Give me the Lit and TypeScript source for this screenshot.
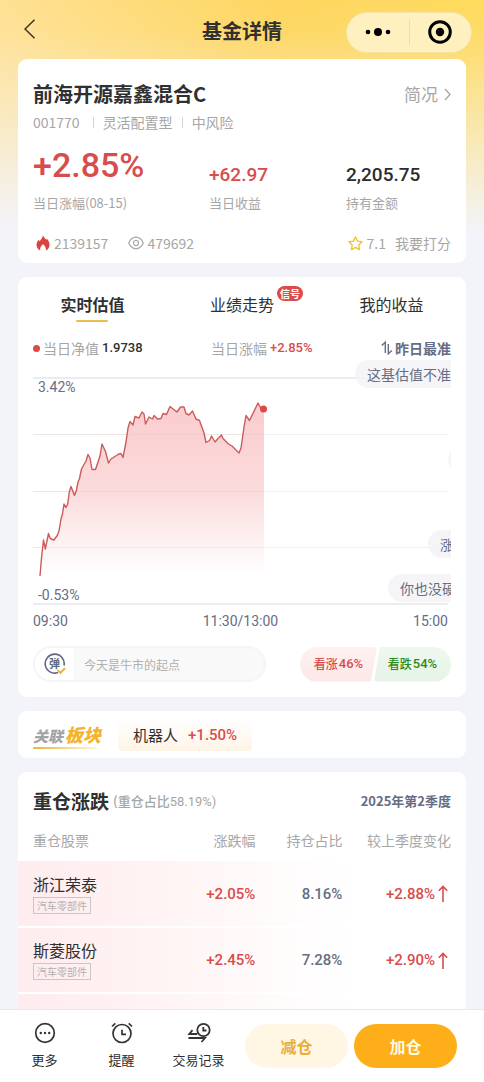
import { LitElement, html, css, svg } from "lit";
import { customElement, state } from "lit/decorators.js";

interface Holding {
  name: string;
  tag: string;
  change: string;
  share: string;
  diff: string;
}

const HOLDINGS: Holding[] = [
  { name: "浙江荣泰", tag: "汽车零部件", change: "+2.05%", share: "8.16%", diff: "+2.88%" },
  { name: "斯菱股份", tag: "汽车零部件", change: "+2.45%", share: "7.28%", diff: "+2.90%" },
  { name: "北特科技", tag: "汽车零部件", change: "+1.86%", share: "7.05%", diff: "+2.71%" },
];

/* Intraday estimate, in the units of the chart's 418 x 228 view box. */
const SERIES =
  "7,199 8.6,180 10.5,163 12.3,172 15.5,156.5 17.3,161.5 21,163 24.3,158.5 26,154 28,142 29.5,137 31,127 33,130.5 34.7,127 36.3,115 38,109.5 41.5,118.5 43.5,113 45,105 46.5,101.5 48.5,92 53,84 55,77.5 57,81 59,92.5 62.5,92.5 67,79 69,67 72.5,74.5 75.5,86 78,82 85,77.5 88,76.5 90,80.5 93,65 95,51 97,44.5 100,48 102,39.5 106,41 109,35 111,37 112.5,47 116,40 119.5,42 121,38.5 124.5,42 128,41.5 130,36.5 133.5,37.5 137,29.5 139.5,31.5 144,35 147.5,30 151,30 153,36.5 156,38 159.5,34 163,42 166.5,43.5 171,56 173,65.5 176.5,63.5 178.5,59 182,65 185,61.5 188.5,58 190,61.5 195.5,67 199,69 206,76 208,71 211,50 213,38.5 216.5,43.5 225,26 228,31.5 231,32";

@customElement("intraday-chart")
export class IntradayChart extends LitElement {
  static styles = css`
    :host { display: block; }
    .frame { position: relative; overflow: hidden; }
    .plot { display: block; width: 100%; height: 228px; }
    .label {
      position: absolute;
      left: 5px;
      font-size: 14px;
      line-height: 16px;
    }
    .high { top: 2px; }
    .low { bottom: 2px; }
    .axis {
      display: flex;
      justify-content: space-between;
      padding: 7px 3px 0 0;
      font-size: 14px;
      line-height: 18px;
    }
  `;

  render() {
    return html`
      <div class="frame">
        <svg class="plot" viewBox="0 0 418 228" preserveAspectRatio="none" role="img" aria-label="实时估值">
          <defs>
            <linearGradient id="fill" x1="0" y1="0" x2="0" y2="1">
              <stop offset="0" stop-color="#fac9cb" />
              <stop offset="0.5" stop-color="#fbd9da" />
              <stop offset="1" stop-color="#ffffff" />
            </linearGradient>
          </defs>
          ${[57.5, 114.5, 170.5].map((y) => svg`<path d="M0 ${y}H415" stroke="#f1f1f2" />`)}
          <path d="M0 1H415M0 227H415" stroke="#e3e6ea" stroke-width="1.5" />
          <polygon points="${SERIES} 231,199 7,199" fill="url(#fill)" opacity="0.95" />
          ${[57.5, 114.5, 170.5].map((y) => svg`<path d="M0 ${y}H231" stroke="#d9a5a5" stroke-opacity="0.13" />`)}
          <polyline points="${SERIES}" fill="none" stroke="#cc5b5b" stroke-width="1.4" stroke-linejoin="round" />
          <circle cx="230.5" cy="32" r="3.5" fill="#e24546" />
        </svg>
        <span class="label high">3.42%</span>
        <span class="label low">-0.53%</span>
      </div>
      <div class="axis"><span>09:30</span><span>11:30/13:00</span><span>15:00</span></div>
    `;
  }
}

@customElement("app-root")
export class AppRoot extends LitElement {
  @state() private tab = 0;

  static styles = css`
    :host {
      --red: #d94c4c;
      --grey: #a6a6a6;
      --slate: #666d85;
      --ink: #303030;
      --num: "Roboto", "Noto Sans CJK SC", sans-serif;
      display: flex;
      flex-direction: column;
      height: 100vh;
      overflow: hidden;
      color: var(--ink);
      background: #f3f4fa;
      font-family: "Noto Sans CJK SC", sans-serif;
      font-size: 14px;
      line-height: 20px;
    }
    * { box-sizing: border-box; }
    button {
      border: 0;
      padding: 0;
      background: none;
      color: inherit;
      font: inherit;
      cursor: pointer;
    }
    a { color: inherit; text-decoration: none; }
    svg { display: block; flex: none; }
    h1, h2, dl, dd, dt, p { margin: 0; font: inherit; }

    .scroll {
      flex: 1;
      min-height: 0;
      overflow: hidden;
      background:
        linear-gradient(180deg, rgba(243, 244, 250, 0) 0, rgba(243, 244, 250, 0.05) 30px, #f3f4fa 232px) 0 0 / 100% 240px no-repeat,
        linear-gradient(122deg, rgba(255, 255, 255, 0) 68%, rgba(255, 218, 90, 0.6) 68%) 0 0 / 100% 240px no-repeat,
        linear-gradient(90deg, #ffe193 0, #fed65f 58%, #fedb63 100%) 0 0 / 100% 240px no-repeat,
        #f3f4fa;
    }
    .top {
      display: grid;
      grid-template-columns: 1fr auto 1fr;
      align-items: center;
      height: 59px;
      padding: 5px 12px 0;
    }
    .back { justify-self: start; margin: 0 0 6px 12px; }
    .title { font-size: 20px; line-height: 28px; font-weight: 700; margin-bottom: 3px; }
    .capsule {
      justify-self: end;
      display: flex;
      align-items: center;
      width: 126px;
      height: 41px;
      border-radius: 21px;
      background: #fff0c0;
      border: 1px solid #f6e2a6;
    }
    .capsule button { flex: 1; display: grid; place-items: center; height: 100%; }
    .capsule i { width: 1px; height: 25px; background: #ecdcae; }

    .page { display: flex; flex-direction: column; gap: 14px; padding: 0 18px; }
    .card { background: #fff; border-radius: 9px; padding: 0 15px; flex: none; }

    .fund { padding-top: 21px; padding-bottom: 10px; }
    .row { display: flex; align-items: center; justify-content: space-between; }
    .name { font-size: 20px; line-height: 28px; font-weight: 700; }
    .brief { display: flex; align-items: center; gap: 6px; font-size: 17px; line-height: 24px; color: var(--grey); }
    .meta { display: flex; align-items: center; color: var(--grey); margin-top: 4px; gap: 9px; font-size: 14px; }
    .meta i { width: 1px; height: 11px; background: #d4d4d4; }
    .meta i:first-of-type { margin-left: 4px; }
    .stats { display: grid; grid-template-columns: 176px 137px 1fr; align-items: end; margin-top: 11px; }
    .stats div { display: flex; flex-direction: column-reverse; }
    .stats dt { color: var(--grey); font-size: 13px; margin-top: 6px; }
    .stats dd { font: 500 19px/24px var(--num); }
    .stats .big { font-size: 34px; line-height: 44px; }
    .red { color: var(--red); }
    .stats dd.dark { color: #2c2c2c; }
    .social { display: flex; align-items: center; margin-top: 20px; color: var(--grey); font-size: 14px; padding-left: 3px; }
    .social span, .social a { display: flex; align-items: center; gap: 4px; }
    .social .views { margin-left: 20px; gap: 3px; }
    .social .rate { margin-left: auto; }
    .rate b { font-weight: 400; margin-right: 5px; }

    .chart { padding-top: 15px; padding-bottom: 15px; }
    .tabs { display: grid; grid-template-columns: 119px 1fr 119px; justify-items: center; }
    .tab { position: relative; font-size: 16px; line-height: 24px; padding-bottom: 6px; }
    .tab.on { font-weight: 700; }
    .tab.on::after {
      content: "";
      position: absolute;
      left: 50%;
      bottom: 0;
      width: 32px;
      height: 2px;
      margin-left: -16px;
      border-radius: 1px;
      background: #e9bd4e;
    }
    .signal {
      position: absolute;
      left: 100%;
      top: -6px;
      margin-left: 3px;
      padding: 0 3px;
      border-radius: 8px;
      background: #dc4b4b;
      color: #fff;
      font-size: 10px;
      line-height: 15px;
      font-weight: 700;
      white-space: nowrap;
    }
    .legend { display: flex; align-items: center; justify-content: space-between; margin-top: 16px; color: var(--grey); font-size: 14px; }
    .legend span { display: flex; align-items: center; gap: 3px; }
    .legend b { font: 500 13px/20px var(--num); color: var(--ink); }
    .legend b.red { color: var(--red); }
    .dot { width: 7px; height: 7px; border-radius: 50%; background: #dd4848; }
    .sort { display: flex; align-items: center; gap: 2px; font-weight: 700; color: var(--slate); }
    .plot { position: relative; overflow: hidden; padding-top: 19px; color: var(--slate); font-family: var(--num); }
    .barrage { position: absolute; inset: 0; overflow: hidden; pointer-events: none; }
    .bubble {
      position: absolute;
      height: 28px;
      min-width: 120px;
      padding: 0 12px;
      border-radius: 14px;
      background: rgba(243, 243, 247, 0.85);
      font-family: "Noto Sans CJK SC", sans-serif;
      font-size: 14px;
      line-height: 28px;
      white-space: nowrap;
    }
    .b1 { left: 322px; top: 2px; }
    .b2 { left: 415px; top: 87px; }
    .b3 { left: 395px; top: 172px; }
    .b4 { left: 355px; top: 216px; }

    .vote { display: flex; justify-content: space-between; align-items: center; margin-top: 16px; }
    .say {
      display: flex;
      align-items: center;
      width: 233px;
      height: 36px;
      border: 2px solid #f5f5f5;
      border-radius: 18px;
      background: #f9f9f9;
      overflow: hidden;
    }
    .say label { display: grid; place-items: center; width: 39px; height: 100%; background: #fff; flex: none; }
    .say input {
      flex: 1;
      min-width: 0;
      height: 100%;
      border: 0;
      outline: 0;
      padding: 0 10px;
      background: none;
      font: 12px/20px "Noto Sans CJK SC", sans-serif;
      color: var(--ink);
    }
    .say input::placeholder { color: #b0b0b0; opacity: 1; }
    .sides { display: flex; }
    .side { display: flex; align-items: center; justify-content: center; gap: 1px; height: 35px; width: 77px; font-size: 12px; font-weight: 500; }
    .side b { font: 500 13px/20px var(--num); }
    .up { color: var(--red); background: linear-gradient(#fff1f1, #fce8e8); border-radius: 18px 4px 4px 18px; clip-path: polygon(0 0, 100% 0, 92% 100%, 0 100%); }
    .down { color: #2b8a1c; background: linear-gradient(#eff8ef, #e6f3e6); border-radius: 4px 18px 18px 4px; clip-path: polygon(8% 0, 100% 0, 100% 100%, 0 100%); margin-left: -3px; }

    .linked { display: flex; align-items: center; gap: 14px; height: 47px; }
    .brand { position: relative; display: flex; align-items: baseline; gap: 2px; font-style: italic; font-weight: 900; font-size: 15px; line-height: 24px; color: #a3a3a3; padding-right: 3px; }
    .brand b { font-size: 18px; color: #f5b22c; font-weight: 900; }
    .brand::after { content: ""; position: absolute; left: 0; right: 8px; bottom: -1px; height: 2px; border-radius: 1px; background: linear-gradient(90deg, #f0b23a, #fff4d8); }
    .sector { display: flex; align-items: center; gap: 10px; height: 32px; padding: 0 15px; border-radius: 4px; background: linear-gradient(#fff, #fef4e6); font-size: 15px; }
    .sector b { font: 500 15px/24px var(--num); color: var(--red); }

    .holdings { padding: 15px 0 0; }
    .head { padding: 0 15px; }
    .head h2 { display: flex; align-items: center; gap: 4px; font-size: 19px; line-height: 28px; font-weight: 700; }
    .head small { font-size: 13px; font-weight: 500; color: var(--grey); }
    .head small span { font: 400 13px/20px var(--num); }
    .head button { font-weight: 700; color: var(--slate); font-size: 13px; }
    table { width: 100%; border-collapse: collapse; table-layout: fixed; margin-top: 3px; }
    th { font-weight: 400; color: var(--grey); font-size: 14px; line-height: 20px; height: 43px; padding: 0; text-align: right; }
    th:first-child { text-align: left; padding-left: 15px; }
    th:last-child { padding-right: 15px; }
    .c1 { width: 34%; }
    .c2 { width: 19%; }
    .c3 { width: 87px; }
    tbody tr { background: linear-gradient(90deg, #feecee 0, #fff3f3 30%, #fffcfc 60%, #fff 75%); border-bottom: 2px solid #fff; }
    td { height: 66px; padding: 0; text-align: right; font: 500 15px/24px var(--num); }
    td:first-child { text-align: left; padding-left: 15px; font: inherit; }
    td:last-child { padding-right: 18px; }
    td a { display: block; font-size: 16px; line-height: 22px; }
    .tag { display: inline-block; margin-top: 2px; padding: 0 3px; border: 1px solid #ccc5c5; color: #b5b0b0; font-size: 10px; line-height: 15px; vertical-align: top; }
    .share { color: var(--slate); }
    .diff { display: flex; justify-content: flex-end; align-items: center; gap: 3px; }

    .bar { flex: none; display: flex; align-items: center; height: 73px; padding: 0 27px 0 6px; background: #fff; border-top: 1px solid #e9e9ec; }
    .tool { display: flex; flex-direction: column; align-items: center; gap: 6px; width: 77px; font-size: 13px; line-height: 20px; }
    .cta { flex: 1; height: 44px; border-radius: 22px; font-size: 16px; line-height: 24px; font-weight: 700; }
    .less { margin-left: 8px; color: #eaae38; background: #fff6e4; }
    .more { margin-left: 6px; color: #fffbe6; background: #fdae18; }
  `;

  private tabButton(i: number, text: string, badge = "") {
    return html`<button
      class="tab ${this.tab === i ? "on" : ""}"
      role="tab"
      aria-selected=${this.tab === i ? "true" : "false"}
      @click=${() => (this.tab = i)}
    >${text}${badge ? html`<span class="signal">${badge}</span>` : ""}</button>`;
  }

  render() {
    return html`
      <div class="scroll">
        <header class="top">
          <button class="back" aria-label="返回">
            <svg width="12" height="20" viewBox="0 0 12 20" fill="none" stroke="#3b3320" stroke-width="1.5"><path d="M10.500 .8 1 10l9.500 9.200" /></svg>
          </button>
          <h1 class="title">基金详情</h1>
          <div class="capsule">
            <button aria-label="菜单">
              <svg width="26" height="10" viewBox="0 0 26 10"><circle cx="3" cy="5" r="2.300" /><circle cx="13" cy="5" r="4" /><circle cx="23" cy="5" r="2.300" /></svg>
            </button>
            <i></i>
            <button aria-label="关闭">
              <svg width="24" height="24" viewBox="0 0 24 24"><circle cx="12" cy="12" r="10.300" fill="none" stroke="#000" stroke-width="3" /><circle cx="12" cy="12" r="4.200" /></svg>
            </button>
          </div>
        </header>

        <main class="page">
          <section class="card fund">
            <div class="row">
              <h2 class="name">前海开源嘉鑫混合C</h2>
              <a class="brief" href="#">简况
                <svg width="7" height="13" viewBox="0 0 7 13" fill="none" stroke="#a6a6a6" stroke-width="1.3"><path d="m1 1 5 5.500L1 12" /></svg>
              </a>
            </div>
            <div class="meta"><span>001770</span><i></i><span>灵活配置型</span><i></i><span>中风险</span></div>
            <dl class="stats">
              <div><dt>当日涨幅(08-15)</dt><dd class="big red">+2.85%</dd></div>
              <div><dt>当日收益</dt><dd class="red">+62.97</dd></div>
              <div><dt>持有金额</dt><dd class="dark">2,205.75</dd></div>
            </dl>
            <div class="social">
              <span>
                <svg width="14" height="16" viewBox="0 0 14 16"><path fill="#db4343" d="M7 0c.5 2.200 2 3.200 3.200 4.800.4-.4.5-.8.5-1.400 1.800 1.900 2.800 4 2.800 6.300 0 2.800-1.400 4.900-3.700 5.900.6-2.300-.6-4.700-2.800-6.300-2.200 1.600-3.400 4-2.800 6.300C1.900 14.600.5 12.500.5 9.800c0-2.300 1.200-3.600 2.100-5.100.6.5.8 1 .9 1.700C5 4.700 6.700 2.800 7 0Z" /></svg>
                2139157
              </span>
              <span class="views">
                <svg width="16" height="14" viewBox="0 0 16 14" fill="none" stroke="#a6a6a6" stroke-width="1.2"><path d="M.7 7C2.500 3 5 1.200 8 1.200S13.500 3 15.300 7C13.500 11 11 12.800 8 12.800S2.500 11 .7 7Z" /><circle cx="8" cy="7" r="2.500" /></svg>
                479692
              </span>
              <a class="rate" href="#">
                <svg width="15" height="15" viewBox="0 0 15 15" fill="none" stroke="#edc52f" stroke-width="1.4" stroke-linejoin="round"><path d="m7.500 1 2 4.100 4.500.7-3.200 3.200.7 4.600-4-2.200-4 2.200.7-4.600L1 5.800l4.500-.7Z" /></svg>
                <b>7.1</b>我要打分
              </a>
            </div>
          </section>

          <section class="card chart">
            <div class="tabs" role="tablist">
              ${this.tabButton(0, "实时估值")}${this.tabButton(1, "业绩走势", "信号")}${this.tabButton(2, "我的收益")}
            </div>
            <div class="legend">
              <span><i class="dot"></i>当日净值 <b>1.9738</b></span>
              <span>当日涨幅 <b class="red">+2.85%</b></span>
              <button class="sort">
                <svg width="12" height="14" viewBox="0 0 12 14" fill="none" stroke="#666d85" stroke-width="1.4"><path d="M.8 4.500 4.300 1.200V12M7.300 3v9.800L10.800 9.500" /></svg>昨日最准
              </button>
            </div>
            <div class="plot">
              <intraday-chart></intraday-chart>
              <div class="barrage">
                <span class="bubble b1">这基估值不准啊</span>
                <span class="bubble b2"></span>
                <span class="bubble b3">涨</span>
                <span class="bubble b4">你也没硬</span>
              </div>
            </div>
            <div class="vote">
              <div class="say">
                <label for="say" aria-label="弹幕">
                  <svg width="22" height="22" viewBox="0 0 22 22">
                    <path d="M20 12.500A9.500 9.500 0 1 0 14 19.500" fill="none" stroke="#5f6680" stroke-width="1.6" />
                    <text x="10.5" y="15" text-anchor="middle" font-size="11" font-weight="700" fill="#5f6680">弹</text>
                    <path d="m13.500 17 3 2.800 4.500-4.600" fill="none" stroke="#f0b52e" stroke-width="2" />
                  </svg>
                </label>
                <input id="say" type="text" placeholder="今天是牛市的起点" />
              </div>
              <div class="sides">
                <button class="side up">看涨<b>46%</b></button>
                <button class="side down">看跌<b>54%</b></button>
              </div>
            </div>
          </section>

          <section class="card linked">
            <span class="brand">关联<b>板块</b></span>
            <a class="sector" href="#">机器人 <b>+1.50%</b></a>
          </section>

          <section class="card holdings">
            <div class="row head">
              <h2>重仓涨跌 <small>(重仓占比<span>58.19%)</span></small></h2>
              <button>2025年第2季度</button>
            </div>
            <table>
              <thead>
                <tr><th class="c1">重仓股票</th><th class="c2">涨跌幅</th><th class="c3">持仓占比</th><th>较上季度变化</th></tr>
              </thead>
              <tbody>
                ${HOLDINGS.map(
                  (h) => html`<tr>
                    <td><a href="#">${h.name}</a><span class="tag">${h.tag}</span></td>
                    <td class="red">${h.change}</td>
                    <td class="share">${h.share}</td>
                    <td class="red"><span class="diff">${h.diff}
                      <svg width="10" height="17" viewBox="0 0 10 17" fill="none" stroke="#d94c4c" stroke-width="1.6"><path d="M5 17V1.500M.8 5.700 5 1.500l4.200 4.200" /></svg></span></td>
                  </tr>`
                )}
              </tbody>
            </table>
          </section>
        </main>
      </div>

      <nav class="bar">
        <button class="tool">
          <svg width="22" height="22" viewBox="0 0 22 22" fill="none" stroke="#333" stroke-width="1.7"><circle cx="11" cy="11" r="9.300" /><g fill="#333" stroke="none"><circle cx="6.800" cy="11" r="1.200" /><circle cx="11" cy="11" r="1.200" /><circle cx="15.200" cy="11" r="1.200" /></g></svg>
          更多
        </button>
        <button class="tool">
          <svg width="22" height="22" viewBox="0 0 22 22" fill="none" stroke="#333" stroke-width="1.7"><circle cx="11" cy="11.500" r="9" /><path d="M11 7.800v4.500h4M1 4.500 4.300 1.300M21 4.500l-3.300-3.200" /></svg>
          提醒
        </button>
        <button class="tool">
          <svg width="24" height="22" viewBox="0 0 24 22" fill="none" stroke="#333" stroke-width="1.8"><circle cx="16.500" cy="8" r="6.200" /><path d="M16.300 5v3.500h3.200M5.500 8.200 2.300 12h8M1.500 16h16.500l-3.500 4" /></svg>
          交易记录
        </button>
        <button class="cta less">减仓</button>
        <button class="cta more">加仓</button>
      </nav>
    `;
  }
}
